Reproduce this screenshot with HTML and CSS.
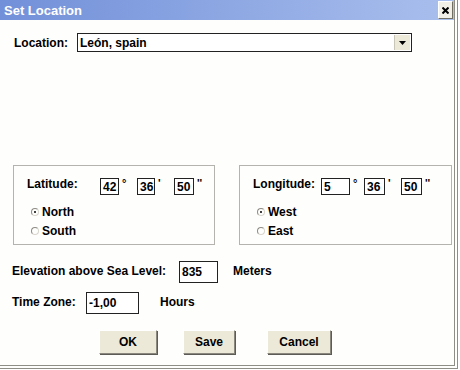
FILE: index.html
```html
<!DOCTYPE html>
<html lang="en">
<head>
    <meta charset="UTF-8">
    <title>Set Location</title>
    <link rel="stylesheet" href="styles.css">
</head>
<body>

    <div class="window">
        <div class="titlebar">
            <span class="title">Set Location</span>
            <span class="close-btn">
                <svg width="7" height="7" viewBox="0 0 7 7"><path d="M0.5 0.5L6.5 6.5M6.5 0.5L0.5 6.5" stroke="#000" stroke-width="2"/></svg>
            </span>
        </div>

        <div class="location-row">
            <span class="label location-label">Location:</span>
            <div class="combo">
                <span class="combo-text">León, spain</span>
                <span class="combo-btn">
                    <svg width="7" height="4" viewBox="0 0 7 4"><path d="M0 0h7L3.5 4z" fill="#000"/></svg>
                </span>
            </div>
        </div>

        <div class="groups">
            <div class="group group-lat">
                <div class="coord-row">
                    <span class="label coord-label lat-label">Latitude:</span>
                    <span class="field w19">42</span><span class="unit u18">°</span>
                    <span class="field w18">36</span><span class="unit u19">'</span>
                    <span class="field w20">50</span><span class="unit">''</span>
                </div>
                <div class="radio-row"><span class="radio checked"></span>North</div>
                <div class="radio-row"><span class="radio"></span>South</div>
            </div>

            <div class="group group-lon">
                <div class="coord-row">
                    <span class="label coord-label lon-label">Longitude:</span>
                    <span class="field w29">5</span><span class="unit u14">°</span>
                    <span class="field w21">36</span><span class="unit u16">'</span>
                    <span class="field w21">50</span><span class="unit">''</span>
                </div>
                <div class="radio-row"><span class="radio checked"></span>West</div>
                <div class="radio-row"><span class="radio"></span>East</div>
            </div>
        </div>

        <div class="value-row elevation-row">
            <span class="label elev-label">Elevation above Sea Level:</span>
            <span class="field big w39">835</span>
            <span class="label suffix meters">Meters</span>
        </div>

        <div class="value-row tz-row">
            <span class="label tz-label">Time Zone:</span>
            <span class="field big w53">-1,00</span>
            <span class="label suffix hours">Hours</span>
        </div>

        <div class="button-row">
            <button class="btn btn-ok">OK</button>
            <button class="btn btn-save">Save</button>
            <button class="btn btn-cancel">Cancel</button>
        </div>
    </div>

</body>
</html>
```

FILE: styles.css
```css
body {
    margin: 0;
    padding: 0;
    background-color: #ffffff;
    font-family: 'Liberation Sans', Arial, sans-serif;
    font-size: 12px;
    font-weight: 700;
    color: #000;
}

.window {
    width: 454px;
    height: 365px;
    background-color: #fefefd;
    border-right: 4px double #8e8d86;
    border-bottom: 4px double #8e8d86;
    box-sizing: content-box;
}

/* Title bar */
.titlebar {
    height: 20px;
    display: flex;
    align-items: center;
    justify-content: space-between;
    background: linear-gradient(to right, #7290d9, #a9bfed);
}

.title {
    color: #fff;
    font-size: 13px;
    padding-left: 4px;
}

.close-btn {
    width: 13px;
    height: 16px;
    margin-right: 1px;
    background-color: #f1efe6;
    border: 1px solid;
    border-color: #fff #716f64 #716f64 #fff;
    display: flex;
    align-items: center;
    justify-content: center;
}

/* Location combo */
.location-row {
    display: flex;
    align-items: center;
    margin-top: 13px;
    padding-left: 14px;
}

.location-label {
    width: 63px;
}

.combo {
    width: 333px;
    height: 17px;
    border: 1px solid #222;
    display: flex;
    align-items: center;
    justify-content: space-between;
    background-color: #fff;
}

.combo-text {
    padding-left: 2px;
}

.combo-btn {
    width: 15px;
    height: 15px;
    margin-right: 1px;
    background-color: #ece9d8;
    border-left: 1px solid #c9c6b8;
    display: flex;
    align-items: center;
    justify-content: center;
}

/* Latitude / Longitude groups */
.groups {
    display: flex;
    margin-top: 113px;
    padding-left: 13px;
}

.group {
    height: 80px;
    border: 1px solid #b4b3ad;
    padding: 12px 0 0 13px;
    box-sizing: border-box;
}

.group-lat {
    width: 202px;
}

.group-lon {
    width: 213px;
    margin-left: 24px;
}

.coord-row {
    display: flex;
    align-items: center;
    height: 17px;
}

.coord-label {
    padding-bottom: 5px;
}

.lat-label {
    width: 73px;
}

.lon-label {
    width: 68px;
}

.field {
    height: 17px;
    border: 1px solid #222;
    box-sizing: border-box;
    padding-left: 2px;
    display: flex;
    align-items: center;
    background-color: #fff;
}

.field.big {
    height: 22px;
}

.unit {
    align-self: flex-start;
    padding-left: 3px;
    line-height: 10px;
    font-size: 11px;
}

.w18 { width: 18px; }
.w19 { width: 19px; }
.w20 { width: 20px; }
.w21 { width: 21px; }
.w29 { width: 29px; }
.w39 { width: 39px; }
.w53 { width: 53px; }

.u14 { width: 14px; box-sizing: border-box; }
.u16 { width: 16px; box-sizing: border-box; }
.u18 { width: 18px; box-sizing: border-box; }
.u19 { width: 19px; box-sizing: border-box; }

.radio-row {
    display: flex;
    align-items: center;
    height: 19px;
    padding-left: 4px;
}

.coord-row + .radio-row {
    margin-top: 7px;
}

.radio {
    width: 6px;
    height: 6px;
    border: 1px solid;
    border-color: #8d8b83 #d8d6cc #d8d6cc #8d8b83;
    border-radius: 50%;
    margin-right: 3px;
    display: flex;
    align-items: center;
    justify-content: center;
}

.radio.checked::after {
    content: "";
    width: 2px;
    height: 2px;
    background-color: #000;
    border-radius: 50%;
}

/* Elevation / time zone */
.value-row {
    display: flex;
    align-items: center;
    padding-left: 12px;
}

.elevation-row {
    margin-top: 16px;
}

.tz-row {
    margin-top: 9px;
}

.elev-label {
    width: 167px;
}

.tz-label {
    width: 74px;
}

.value-row .label {
    padding-bottom: 3px;
}

.meters {
    margin-left: 15px;
}

.hours {
    margin-left: 21px;
}

/* Buttons */
.button-row {
    display: flex;
    margin-top: 16px;
    padding-left: 99px;
}

.btn {
    height: 24px;
    background-color: #ece9d8;
    border: 1px solid;
    border-color: #fff #8a887e #8a887e #fff;
    box-shadow: 1px 1px 0 #5c5b55;
    font-family: inherit;
    font-size: 12px;
    font-weight: 700;
    padding: 0;
}

.btn-ok {
    width: 58px;
}

.btn-save {
    width: 52px;
    margin-left: 26px;
}

.btn-cancel {
    width: 64px;
    margin-left: 32px;
}
```
